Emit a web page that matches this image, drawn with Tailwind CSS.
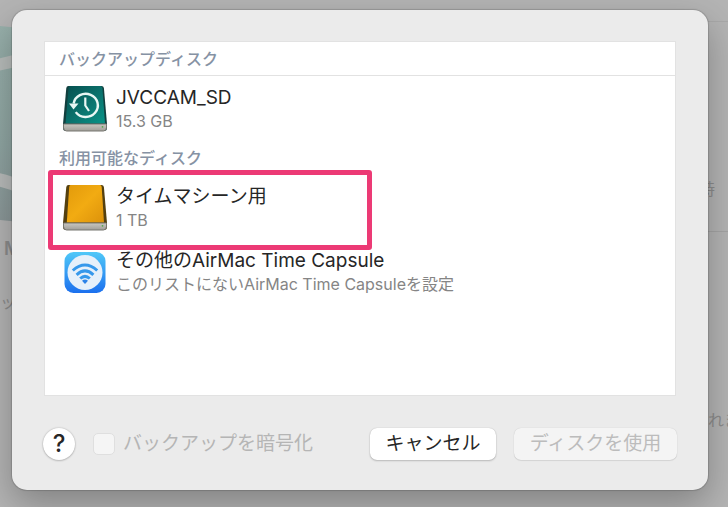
<!DOCTYPE html>
<html lang="ja">
<head>
  <meta charset="UTF-8" />
  <meta name="viewport" content="width=device-width, initial-scale=1" />
  <title>バックアップディスクを選択</title>
  <script src="https://cdn.jsdelivr.net/npm/@tailwindcss/browser@4"></script>
</head>
<body class="relative flex min-h-screen overflow-hidden bg-[#b4b4b4] pt-[10px] pr-5 pb-[17px] pl-3 font-['Inter','Noto_Sans_CJK_JP',sans-serif] text-[#262626]">

  <!-- Dimmed preferences window behind the sheet -->
  <div class="absolute inset-0 text-[#8c8c8c]" aria-hidden="true">
    <svg class="absolute top-0 left-0" width="40" height="240" viewBox="0 0 40 240">
      <defs>
        <linearGradient id="glass" x1="0" y1="0" x2="0" y2="1">
          <stop offset="0" stop-color="#98b0ab" />
          <stop offset="0.6" stop-color="#90a6a3" />
          <stop offset="1" stop-color="#8b9798" />
        </linearGradient>
      </defs>
      <path d="M0 26L40 30V224L0 220Z" fill="url(#glass)" />
      <path d="M-10 67Q8 62 20 60" fill="none" stroke="#b8bdbb" stroke-width="12" />
      <path d="M-10 178Q8 181 20 187" fill="none" stroke="#b8bbba" stroke-width="13" />
    </svg>
    <span class="absolute top-[235px] left-1 text-lg font-semibold">Mac</span>
    <span class="absolute top-[290px] left-0 text-base">ップ</span>
    <span class="absolute top-[177px] right-[13px] text-base">時</span>
    <span class="absolute top-[408px] -right-[12px] text-base">れま</span>
    <div class="absolute top-[21px] right-0 h-px w-5 bg-[#a9a9a9]"></div>
    <div class="absolute top-[231px] right-0 h-px w-5 bg-[#a5a5a5]"></div>
  </div>

  <!-- Sheet -->
  <main role="dialog" aria-label="バックアップディスクを選択" class="relative flex flex-1 flex-col rounded-[15px] bg-[#ebebeb] px-8 pt-[31px] pb-[30px] shadow-[0_0_1px_1px_rgba(0,0,0,0.15),0_14px_36px_rgba(0,0,0,0.28)]">

    <section class="flex-1 border border-[#e2e2e2] bg-white">
      <h2 class="border-b border-[#e2e2e2] pt-[5px] pb-1 pl-[14px] text-base leading-6 font-medium text-[#8692a4]">バックアップディスク</h2>
      <ul>
        <li class="flex items-start gap-2 pt-[9px] pl-[17px]">
          <svg class="h-12 w-[46px] shrink-0" viewBox="0 0 46 48">
            <defs>
              <linearGradient id="teal" x1="0" y1="0" x2="1" y2="1">
                <stop offset="0" stop-color="#07504f" />
                <stop offset="0.6" stop-color="#0b7771" />
                <stop offset="1" stop-color="#079487" />
              </linearGradient>
              <linearGradient id="metal" x1="0" y1="0" x2="0" y2="1">
                <stop offset="0" stop-color="#c9c7c1" />
                <stop offset="1" stop-color="#a09e98" />
              </linearGradient>
            </defs>
            <path d="M6.500 1H39.500Q41.500 1 41.900 3L45 39V43Q45 46 42 46H4Q1 46 1 43V39L4.300 3Q4.500 1 6.500 1Z" fill="#123f3e" />
            <path d="M8 1H38.500Q40 1 40.400 3L43 38.500H3.500L6.500 3Q6.700 1 8 1Z" fill="url(#teal)" />
            <path d="M1.500 39H44.500V42.500Q44.500 46 41.500 46H4.500Q1.500 46 1.500 42.500Z" fill="url(#metal)" stroke="#777771" stroke-width="1" />
            <circle cx="40.500" cy="41.800" r="0.900" fill="#54a84d" />
            <path d="M11.600 18.500A12.200 11.600 0 1 1 13.700 27.100" fill="none" stroke="#e9f7f4" stroke-width="2.400" />
            <path d="M7 18.500H16.500L11.500 24.500Z" fill="#e9f7f4" />
            <path d="M23.300 12.500V20.500L27 26" fill="none" stroke="#e9f7f4" stroke-width="2.200" />
          </svg>
          <div>
            <p class="text-[19px] leading-[26px]">JVCCAM_SD</p>
            <p class="text-base leading-5 text-[#858585]">15.3 GB</p>
          </div>
        </li>
      </ul>

      <h2 class="mt-[13px] pl-[14px] text-base leading-6 font-medium text-[#8692a4]">利用可能なディスク</h2>
      <ul class="flex flex-col gap-4 pt-[14px]">
        <li class="relative flex items-start gap-2 pl-[17px]">
          <svg class="h-12 w-[46px] shrink-0" viewBox="0 0 46 48">
            <defs>
              <linearGradient id="gold" x1="0" y1="0" x2="1" y2="1">
                <stop offset="0" stop-color="#e29a0b" />
                <stop offset="0.5" stop-color="#f2ab12" />
                <stop offset="1" stop-color="#dc920b" />
              </linearGradient>
            </defs>
            <path d="M6.500 1H39.500Q41.500 1 41.900 3L45 39V43Q45 46 42 46H4Q1 46 1 43V39L4.300 3Q4.500 1 6.500 1Z" fill="#54400f" />
            <path d="M8.500 1H38Q39.400 1 39.700 3L42 38.500H4.800L7.200 3Q7.400 1 8.500 1Z" fill="url(#gold)" />
            <path d="M1.500 39H44.500V42.500Q44.500 46 41.500 46H4.500Q1.500 46 1.500 42.500Z" fill="url(#metal)" stroke="#777771" stroke-width="1" />
            <circle cx="40.500" cy="41.800" r="0.900" fill="#54a84d" />
          </svg>
          <div>
            <p class="text-[19px] leading-[26px]">タイムマシーン用</p>
            <p class="text-base leading-5 text-[#858585]">1 TB</p>
          </div>
          <div class="pointer-events-none absolute -top-[14px] left-[3px] h-20 w-[324px] rounded-[3px] border-[5px] border-[#ec3a75]"></div>
        </li>
        <li class="flex items-start gap-2 pl-[17px]">
          <svg class="h-12 w-[46px] shrink-0" viewBox="0 0 46 48">
            <defs>
              <linearGradient id="sky" x1="0" y1="0" x2="0" y2="1">
                <stop offset="0" stop-color="#4fc8f8" />
                <stop offset="1" stop-color="#1c70ee" />
              </linearGradient>
            </defs>
            <rect x="2.500" y="4" width="41" height="41" rx="9" fill="url(#sky)" />
            <circle cx="23" cy="24.500" r="17.500" fill="#e6f0fa" />
            <g fill="none" stroke="#3698eb" stroke-width="3">
              <path d="M10.800 22.500Q23 11.500 35.200 22.500" />
              <path d="M14.600 26.800Q23 19 31.400 26.800" />
              <path d="M18.200 30.500Q23 26.200 27.800 30.500" />
            </g>
            <path d="M20 32.800Q23 30.200 26 32.800L23 36Z" fill="#2d83e8" />
          </svg>
          <div>
            <p class="text-[19px] leading-[26px]">その他のAirMac Time Capsule</p>
            <p class="text-base leading-5 text-[#858585]">このリストにないAirMac Time Capsuleを設定</p>
          </div>
        </li>
      </ul>
    </section>

    <footer class="-mr-px mt-8 flex items-center">
      <button type="button" aria-label="ヘルプ" class="mr-[18px] -ml-px flex size-8 items-center justify-center rounded-full bg-white text-2xl font-medium shadow-[0_0_2px_rgba(0,0,0,0.25),0_1px_2px_rgba(0,0,0,0.15)]">?</button>
      <input id="encrypt" type="checkbox" disabled class="size-[22px] appearance-none rounded-[5px] border border-[#dfdfdf] bg-[#f5f5f5]" />
      <label for="encrypt" class="ml-2 text-[19px] leading-8 text-[#b5b5b5]">バックアップを暗号化</label>
      <button type="button" class="ml-auto h-8 w-[126px] rounded-[7px] bg-white text-[19px] leading-8 shadow-[0_0_1px_rgba(0,0,0,0.25),0_1px_2px_rgba(0,0,0,0.2)]">キャンセル</button>
      <button type="button" disabled class="ml-[18px] h-8 w-[163px] rounded-[7px] bg-[#f4f4f4] text-[19px] leading-8 text-[#bcbcbc] shadow-[0_0_1px_rgba(0,0,0,0.2),0_1px_1px_rgba(0,0,0,0.08)]">ディスクを使用</button>
    </footer>
  </main>

</body>
</html>
